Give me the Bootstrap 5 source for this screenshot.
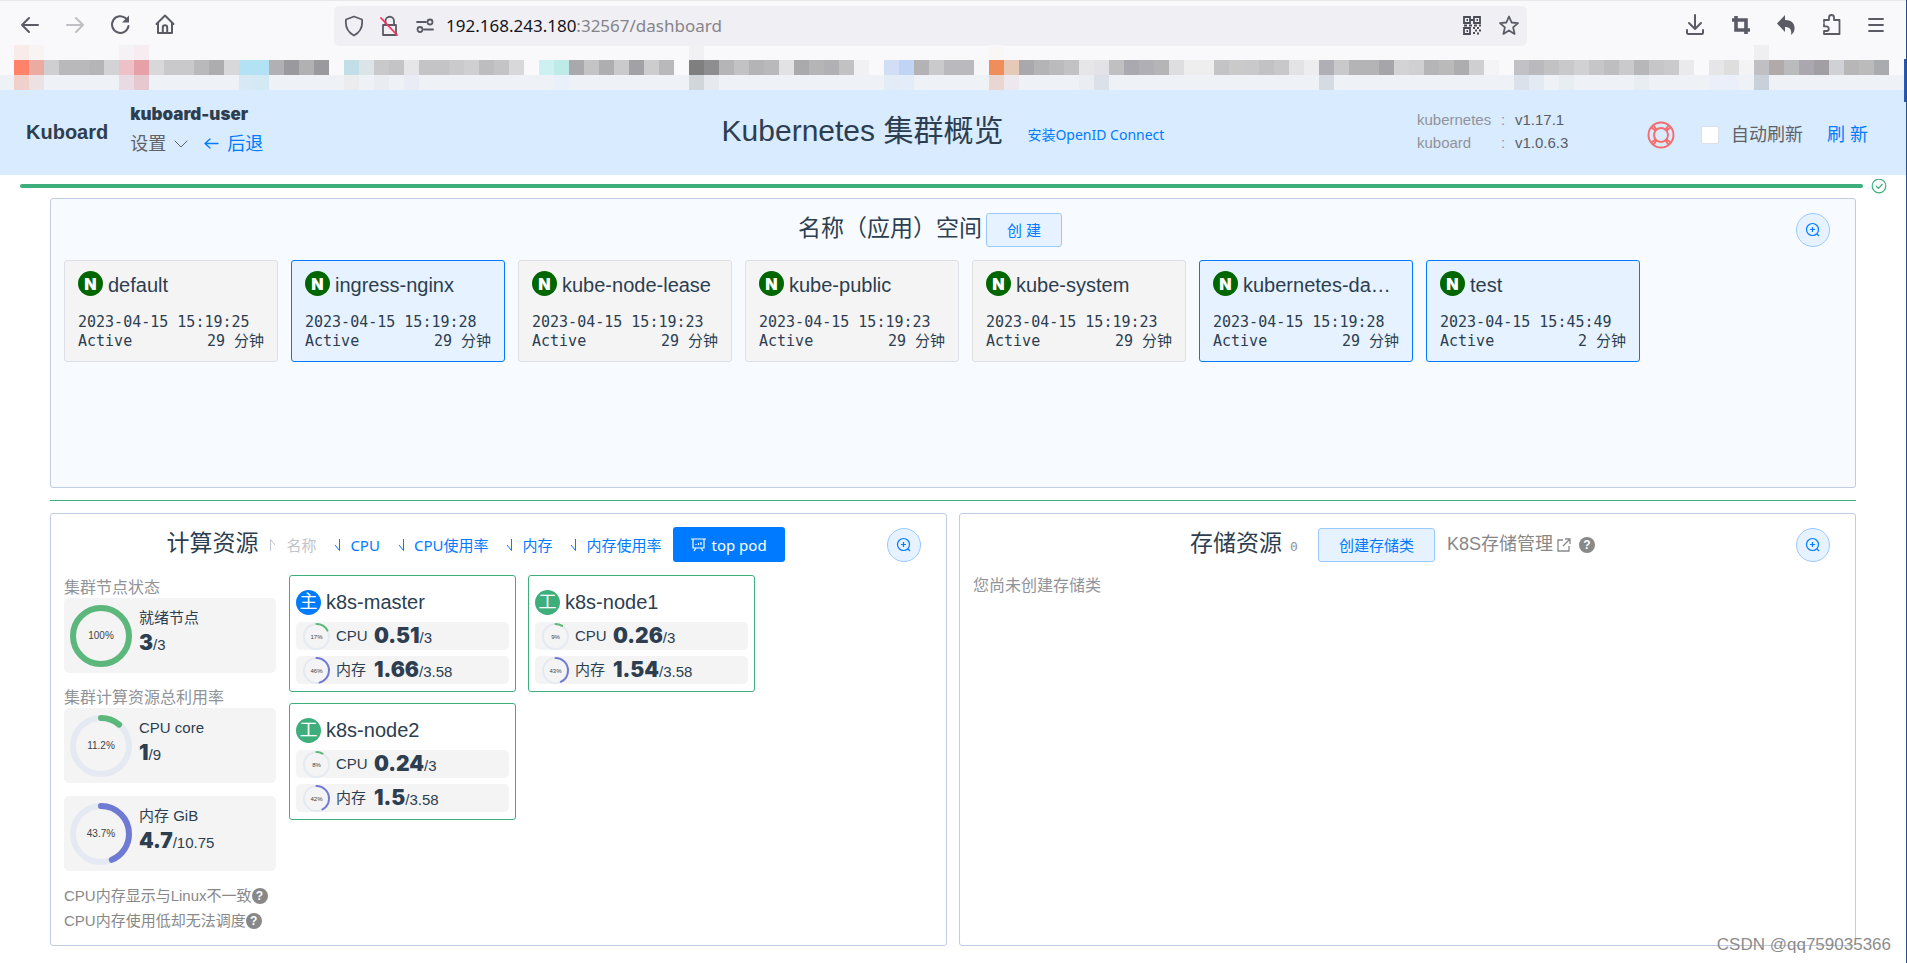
<!DOCTYPE html>
<html lang="zh-CN">
<head>
<meta charset="utf-8">
<meta name="viewport" content="width=device-width, initial-scale=1">
<title>Kuboard</title>
<link href="https://cdn.jsdelivr.net/npm/bootstrap@5.3.0/dist/css/bootstrap.min.css" rel="stylesheet">
<style>
:root{--ink:#2c3e50;--blue:#007bff;--green:#3eaf7c;--muted:#909399;--ui:"Noto Sans","Noto Sans CJK SC",sans-serif;}
body{font-family:"Liberation Sans","Noto Sans CJK SC",sans-serif;font-size:15px;line-height:20px;color:var(--ink);background:#fff;border-right:1px solid #24508f;}
svg{display:block;flex:none}
.ico{fill:none;stroke:currentColor;stroke-width:2;stroke-linecap:round;stroke-linejoin:round}
.plain{background:none;border:0;padding:0;color:inherit;line-height:inherit}
.ui-font{font-family:var(--ui);font-size:14px}
/* browser chrome */
.chrome{background:#f9f9fb;border-top:1px solid #e8e8ea;height:45px;padding:5px 19px 0 18px;color:#5b5b66}
.chrome .tools{width:316px;padding-top:6px;gap:21px}
.address{background:#f0eff4;border-radius:5px;height:40px;flex:1 1 0;padding:0 7px 0 10px}
.host{font-family:var(--ui);font-size:17px;color:#15141a}
.host span{color:#85848a}
.chrome .more{width:360px;padding:0 0 2px 156px}
.bookmarks{overflow:hidden;background:#f9f9fb}
.strip{height:15px;padding-left:14px;overflow:hidden}
.strip i{flex:0 0 15px}
.strip.low{background:#eef2f7}
.thumb{position:absolute;right:0;top:59px;width:2px;height:43px;background:#2457b8}
/* header */
.top{display:grid;grid-template-columns:1fr auto 1fr;background:#d9ebff;height:85px;padding:0 38px 0 26px;align-items:center}
.brand{font-size:20px;font-weight:700;padding-bottom:2px}
.account{margin-left:22px;padding-bottom:6px}
.user{font-family:Inter,"Liberation Sans",sans-serif;font-weight:900;font-size:17px;line-height:20px}
.nav-line{font-size:18px;line-height:24px;color:#606266}
.blue{color:var(--blue);text-decoration:none}
.page-title{font-size:30px;line-height:40px;font-weight:400}
.versions{display:grid;grid-template-columns:84px 14px 100px;line-height:23px;color:var(--muted)}
.versions dt,.versions dd{font-weight:400;margin:0}
.versions .v{color:#5a5e66}
.check{width:18px;height:18px;border:1px solid #dcdfe6;border-radius:2px;background:#fff;appearance:none;flex:none;margin-left:26px}
.big-btn{font-size:18px;line-height:24px}
/* body */
.loadbar{padding:4px 19px 1px 20px;height:23px}
.loadbar .line{height:4px;border-radius:2px;background:var(--green);flex:1;margin-top:5px}
.board{padding:0 50px 17px}
.panel{border:1px solid #bfcce2;border-radius:3px;padding:13px 13px 12px}
.panel.ns{background:#f7fbff;min-height:290px}
.head-row{height:35px;margin-bottom:13px;padding-right:12px}
.head-row h2{font-size:23px;line-height:34px;font-weight:400;margin:0}
.soft{background:#e6f2ff;border:1px solid #99caff;color:var(--blue);border-radius:3px;font-size:15px;line-height:20px;font-family:var(--ui)}
.soft:hover{background:#e6f2ff;color:var(--blue);border-color:#99caff}
.round{width:34px;height:34px;border-radius:50%;display:grid;place-items:center;padding:0}
.divider{height:1px;background:var(--green);margin:12px 0}
.ns-list{gap:13px}
.ns-item{flex:0 0 214px;min-width:0;border:1px solid #dcdfe6;background:#f4f4f5;border-radius:3px;padding:10px 13px 10px}
.ns-item.on{background:#e6f2ff;border-color:var(--blue)}
.dot{width:25px;height:25px;border-radius:50%;color:#fff;display:grid;place-items:center;flex:none;font-size:18px;line-height:24px}
.dot.n{background:#060;font-family:Inter,sans-serif;font-weight:900;font-size:16px}
.dot.m{background:var(--blue)}
.dot.w{background:var(--green)}
.name{font-size:20px;line-height:28px}
.title-line{gap:5px}
.ns-item .title-line{margin-bottom:14px}
.meta{font-family:"DejaVu Sans Mono","Noto Sans CJK SC",monospace;font-size:15px;line-height:19px}
.sort{gap:6px;font-size:15px;font-family:var(--ui)}
.primary{background:var(--blue);color:#fff;border-radius:3px;font:15px/20px var(--ui);padding:7px 18px;height:35px;border:0}
.pair{display:grid;grid-template-columns:1fr 1fr;gap:12px}
.side{width:212px;flex:none}
.label-line{font-size:16px;line-height:21px;padding-top:2px;color:var(--muted)}
.stat{background:#f4f4f5;border-radius:5px;height:75px;padding:0 6px}
.stat-text{margin-left:7px;padding-bottom:8px}
.stat-text .value{margin-top:3px}
.stack{display:grid;gap:13px}
.heavy{font-family:Inter,sans-serif;font-weight:900;font-size:21px;line-height:24px}
.help{color:#888;line-height:25px}
.q{width:16px;height:16px;border-radius:50%;background:#888;color:#fff;font-size:12px;font-weight:700;line-height:16px;text-align:center;flex:none}
.nodes{gap:11px 12px;align-content:flex-start;margin-left:13px}
.node{flex:0 0 227px;border:1px solid var(--green);border-radius:3px;padding:12px 6px 7px}
.usage{background:#f4f4f5;border-radius:5px;height:28px;padding-left:7px;margin-top:6px}
.usage .tag-name{width:38px;margin-left:6px}
.above{margin-top:12px}
.watermark{position:absolute;right:15px;bottom:6px;font-size:17px;line-height:24px;color:#8c8c8c}
.page{position:relative}
</style>
</head>
<body>
<svg width="0" height="0" class="position-absolute" aria-hidden="true">
<symbol id="zoom" viewBox="0 0 16 16"><g fill="none" stroke="currentColor" stroke-width="1.2"><circle cx="7.5" cy="7.5" r="6"/><path d="M7.5 5v5M5 7.5h5M12 12l2 2"/></g></symbol>
<symbol id="up" viewBox="0 0 16 16"><path d="M6.500 14V2.500L11 8" fill="none" stroke="currentColor" stroke-width="1"/></symbol>
<symbol id="down" viewBox="0 0 16 16"><path d="M9.500 2v11.500L5 8" fill="none" stroke="currentColor" stroke-width="1"/></symbol>
</svg>
<div class="page">
<div class="chrome d-flex">
  <div class="tools d-flex align-items-start">
    <button class="plain" aria-label="后退一页"><svg class="ico" width="24" height="24" viewBox="0 0 24 24"><path d="M4 13h16M11 6l-7 7 7 7"/></svg></button>
    <button class="plain" aria-label="前进" style="color:#bfbfc5"><svg class="ico" width="24" height="24" viewBox="0 0 24 24"><path d="M4 13h16M13 6l7 7-7 7"/></svg></button>
    <button class="plain" aria-label="重新加载"><svg class="ico" width="24" height="24" viewBox="0 0 24 24"><path d="M18 6.500A8.300 8.300 0 1 0 20.500 14"/><path d="M21 3.500v7h-7z" fill="currentColor" stroke="none"/></svg></button>
    <button class="plain" aria-label="主页"><svg class="ico" width="24" height="24" viewBox="0 0 24 24"><path d="M3.500 12l8.500-8.500 8.500 8.500M5 11v10h14V11M9.800 21v-5.500a2.200 2.200 0 0 1 4.400 0V21"/></svg></button>
  </div>
  <div class="address d-flex align-items-center">
    <svg class="ico" width="20" height="24" viewBox="0 0 20 24"><path d="M10 2.500l8 3c1 8-2.500 13-8 16-5.500-3-9-8-8-16z" stroke-width="1.800"/></svg>
    <svg class="ico ms-3" width="20" height="24" viewBox="0 0 20 24"><path d="M5.500 10V7a4 4 0 0 1 8.500 0v3M3 11h13v10H3z" stroke-width="1.800"/><path d="M1 4l16 17" stroke="#ff2d5c" stroke-width="1.800"/></svg>
    <svg class="ico ms-3" width="18" height="24" viewBox="0 0 18 24"><path d="M1 8h9M8 15.500h9" stroke-width="1.800"/><circle cx="14" cy="8" r="2.500" stroke-width="1.800"/><circle cx="4" cy="15.500" r="2.500" stroke-width="1.800"/></svg>
    <a class="host ps-2 ms-1 flex-grow-1 text-decoration-none" href="#">192.168.243.180<span>:32567/dashboard</span></a>
    <svg width="20" height="22" viewBox="0 0 20 22" fill="none" stroke="#4b4b55" stroke-width="1.800"><path d="M2 2h6v6H2zM12 2h6v6h-6zM2 13h6v6H2z"/><path d="M4.500 5h1.500M14.500 5H16M4.500 16H6M8 5h4M2 10.500h3M7 10.500h3M12 10.500h3M17 10.500h2M11 13h2M15 13h2M13 15.500h2M17 15.500h2M11 18h2M15 18.500h2" /></svg>
    <svg class="ico ms-3" width="22" height="24" viewBox="0 0 22 24"><path d="M11 2.500l2.600 6 6.400.6-4.900 4.300 1.500 6.500-5.600-3.500-5.600 3.500 1.500-6.500L2 9.100l6.400-.6z" stroke-width="1.800"/></svg>
  </div>
  <div class="more d-flex justify-content-between align-items-center">
    <button class="plain" aria-label="下载"><svg class="ico" width="24" height="24" viewBox="0 0 24 24"><path d="M12 2v13M6 10l6 6 6-6M4 17v2.500a1.500 1.500 0 0 0 1.500 1.500h13a1.500 1.500 0 0 0 1.500-1.500V17"/></svg></button>
    <button class="plain" aria-label="裁剪"><svg width="24" height="24" viewBox="0 0 24 24" fill="none" stroke="currentColor" stroke-width="3.600"><path d="M7 3v14h14M3 7h14v14"/></svg></button>
    <button class="plain" aria-label="撤销"><svg width="24" height="24" viewBox="0 0 24 24" fill="currentColor"><path d="M11 2v5c7 0 10 4 9.500 9-.2 2.500-1.500 4.500-3.500 6 1-5-1-8-6-8v5L3 10.500z"/></svg></button>
    <button class="plain" aria-label="扩展"><svg class="ico" width="24" height="24" viewBox="0 0 24 24"><path d="M4 9V7h5V4.500a2.500 2.500 0 0 1 5 0V7h5.500v14H4v-3h2.500a2.300 2.300 0 0 0 0-4.600H4V11" stroke-width="1.800"/></svg></button>
    <button class="plain" aria-label="菜单"><svg class="ico" width="22" height="24" viewBox="0 0 22 24"><path d="M4 6h14M4 12h14M4 18h14" stroke-width="1.800"/></svg></button>
  </div>
</div>
<div class="bookmarks" aria-hidden="true"><div class="strip d-flex" id="s0"></div><div class="strip d-flex" id="s1"></div><div class="strip low d-flex" id="s2"></div></div>

<header class="top">
  <div class="d-flex align-items-center">
    <div class="brand">Kuboard</div>
    <div class="account">
      <div class="user">kuboard-user</div>
      <div class="nav-line d-flex align-items-center mt-2"><button class="plain d-flex align-items-center gap-2">设置 <svg class="ico" width="14" height="14" viewBox="0 0 14 14"><path d="M1 4l6 6 6-6" stroke-width="1"/></svg></button><a class="blue d-flex align-items-center ms-3 gap-2" href="#"><svg class="ico" width="15" height="15" viewBox="0 0 15 15"><path d="M1 7.500h13M6 3L1 7.500 6 12" stroke-width="1.300"/></svg>后退</a></div>
    </div>
  </div>
  <div class="d-flex align-items-center pe-2 pb-1">
    <h1 class="page-title m-0">Kubernetes 集群概览</h1>
    <a class="blue ui-font ms-4 pt-2" href="#">安装OpenID Connect</a>
  </div>
  <div class="d-flex align-items-center justify-content-end pt-1">
    <dl class="versions m-0 me-4 pe-2 pb-2"><dt>kubernetes</dt><dd>:</dd><dd class="v">v1.17.1</dd><dt>kuboard</dt><dd>:</dd><dd class="v">v1.0.6.3</dd></dl>
    <svg width="28" height="28" viewBox="0 0 28 28" fill="none" stroke="#f56c6c" stroke-width="1.900"><circle cx="14" cy="14" r="12.500"/><circle cx="14" cy="14" r="7"/><path d="M4.500 6.500L9 10M6.500 4.500L10 9M23.500 6.500L19 10M21.500 4.500L18 9M4.500 21.500L9 18M6.500 23.500L10 19M23.500 21.500L19 18M21.500 23.500L18 19"/></svg>
    <input class="check" type="checkbox" id="auto"><label class="big-btn ms-2 ps-1 me-4" for="auto" style="color:#606266">自动刷新</label>
    <button class="plain blue big-btn">刷 新</button>
  </div>
</header>

<div class="loadbar d-flex align-items-start gap-2"><div class="line"></div><svg width="16" height="16" viewBox="0 0 16 16" fill="none" stroke="#3eaf7c" stroke-width="1.200"><circle cx="8" cy="7" r="6.800"/><path d="M5 7l2.500 2.500L11.500 5"/></svg></div>

<main class="board">
  <section class="panel ns">
    <div class="head-row d-flex align-items-center"><div class="d-flex align-items-center justify-content-center flex-grow-1 gap-1"><h2 class="pb-1">名称（应用）空间</h2><button class="btn soft px-3"><span class="px-1">创 建</span></button></div><button class="btn soft round" aria-label="放大"><svg width="16" height="16"><use href="#zoom"/></svg></button></div>
    <div class="ns-list d-flex flex-wrap" id="ns"></div>
  </section>
  <div class="divider"></div>
  <div class="pair">
    <section class="panel">
      <div class="head-row d-flex align-items-center"><div class="d-flex align-items-center justify-content-center flex-grow-1"><h2 class="me-2 pb-1">计算资源</h2>
        <button class="plain sort d-flex align-items-center me-3" style="color:#c0c4cc" disabled><svg width="14" height="16" viewBox="2 0 14 16"><use href="#up" width="16" height="16"/></svg>名称</button>
        <button class="plain sort blue d-flex align-items-center me-3"><svg width="12" height="16" viewBox="2 0 12 16"><use href="#down" width="16" height="16"/></svg>CPU</button>
        <button class="plain sort blue d-flex align-items-center me-3"><svg width="12" height="16" viewBox="2 0 12 16"><use href="#down" width="16" height="16"/></svg>CPU使用率</button>
        <button class="plain sort blue d-flex align-items-center me-3"><svg width="12" height="16" viewBox="2 0 12 16"><use href="#down" width="16" height="16"/></svg>内存</button>
        <button class="plain sort blue d-flex align-items-center me-2"><svg width="12" height="16" viewBox="2 0 12 16"><use href="#down" width="16" height="16"/></svg>内存使用率</button>
        <button class="btn primary d-flex align-items-center ms-1"><svg class="me-1" width="16" height="16" viewBox="0 0 16 16" fill="none" stroke="#fff" stroke-width="1.200"><path d="M0 2h15M2 2v9h11V2M5 11l-2 3M10 11l2 3M5 8V7M7.500 8V6M10 8V5"/></svg>top pod</button></div>
        <button class="btn soft round" aria-label="放大"><svg width="16" height="16"><use href="#zoom"/></svg></button></div>
      <div class="d-flex">
        <div class="side">
          <div class="label-line">集群节点状态</div><div id="st1"></div>
          <div class="label-line above">集群计算资源总利用率</div><div class="stack" id="st2"></div>
          <div class="help above"><div class="d-flex align-items-center">CPU内存显示与Linux不一致<span class="q">?</span></div><div class="d-flex align-items-center">CPU内存使用低却无法调度<span class="q">?</span></div></div>
        </div>
        <div class="nodes d-flex flex-wrap flex-grow-1" id="nodes"></div>
      </div>
    </section>
    <section class="panel">
      <div class="head-row d-flex align-items-center"><div class="d-flex align-items-center justify-content-center flex-grow-1 ps-3"><h2 class="pb-1">存储资源</h2><span class="ms-2 pt-1 me-3" style="font:13px/20px 'DejaVu Sans Mono',monospace;color:#909399">0</span><button class="btn soft ms-1 px-3"><span class="px-1">创建存储类</span></button>
        <a href="#" class="help big-btn text-decoration-none d-flex align-items-center ms-2 ps-1">K8S存储管理<svg class="ms-1 me-2" width="14" height="14" viewBox="0 0 14 14" fill="none" stroke="#888" stroke-width="1.300"><path d="M6 2H1v11h11V8M8 1h5v5M13 1L6 8"/></svg></a><span class="q">?</span></div>
        <button class="btn soft round" aria-label="放大"><svg width="16" height="16"><use href="#zoom"/></svg></button></div>
      <div class="label-line pt-0">您尚未创建存储类</div>
    </section>
  </div>
</main>
<div class="thumb"></div>
<div class="watermark">CSDN @qq759035366</div>
</div>
<script src="https://cdn.jsdelivr.net/npm/bootstrap@5.3.0/dist/js/bootstrap.bundle.min.js"></script>
<script>
const put = (id, html) => document.getElementById(id).innerHTML = html;
const strip = cells => cells.map(c => `<i style="background:${c ? '#' + c : 'transparent'}"></i>`).join('');
const sparse = o => strip(Array.from({length: 125}, (_, i) => o[i]));
put('s1', strip(('ff826b ecaba1 cfcfd1 b9b9bb b9b9bb b5b5b7 d3d3d5 eec0c8 e79fa8 d8d8da c9c9cb c9c9cb b9b9bb adadaf d8d8da b2e2f4 b2e2f4 b1b1b3 9a999e b1b1b3 9a999e f9f9fb c2dfe7 dbe4e7 c9c9cc c4c4c7 e6e6e8 c4c4c6 c4c4c6 cacacc cfcfd1 bdbdbf c4c4c6 d8d8da f9f9fb cdf0f0 beebe8 a9a8ad c4c4c7 aeaeb1 cacacc a2a2a6 cdcdcf b9b9bb f9f9fb 7f7f7f 8e8e91 b5b5b7 c2c2c4 b4b4b7 b9b9bb e2e2e4 aaaaac b5b5b7 b1b0b5 c2c2c4 f1f1f3 f9f9fb d1def6 c0d5f5 b3b3b5 cacacc bab9be bab9be f6f6f8 f08e5b e6cab7 a9a8ad b4b4b6 bbbbbd c2c2c4 e6e6e8 e2e2e7 c0c0c2 aaa9af b0afb5 b5b5b7 dedee0 eeeeee eeeeee c4c4c6 cacaca c9c9cc c2c2c4 c8c8ca e3e3e5 ededef b0afb6 c9c9cc b4b4b6 b4b4b6 a6a5aa d3d3d5 d0d0d2 b5b5b8 bababb adadaf cfcfd1 f4f4f6 f9f9fb c2c1c6 bab9be c2c2c5 c9c9cc d1d1d3 c6c6c9 bebec0 cacacc b7b7b9 c6c6c8 cacacc eaeaec f9f9fb e6e6e8 dededf f3f3f5 c0bfc3 b0abaa b9bbbc aaa8ae a19fa4 d0d1d4 b7b7b7 bbbbbb aaabae').split(' ')));
put('s0', sparse({0:'f9ebea',1:'f9f4f4',7:'f5f2f5',8:'f7ecef',45:'f1f1f3',65:'f9f7f5',116:'efeff1'}));
put('s2', sparse({0:'f0d0cb',1:'ede2e3',7:'e8dbe4',8:'e6c8d1',15:'d6e9f5',16:'d3e9f3',22:'ebeced',24:'e9ecf1',26:'e9ecf5',36:'eaf0f9',45:'d1d6da',46:'e6eaee',58:'e3ebf7',59:'e3ecf9',65:'ead6d0',66:'ede7ee',71:'eaeef2',72:'dce0e8',87:'d6dbe3',100:'dbe1ea',101:'e3eaf4',103:'e8edf2',108:'e8edf2',113:'eaeffa',114:'eaeffa',116:'c8d0d9'}));

put('ns', [['default','15:19:25',29],['ingress-nginx','15:19:28',29,1],['kube-node-lease','15:19:23',29],['kube-public','15:19:23',29],['kube-system','15:19:23',29],['kubernetes-da…','15:19:28',29,1],['test','15:45:49',2,1]]
 .map(([n, t, m, on]) => `<div class="ns-item ${on ? 'on' : ''}"><div class="title-line d-flex"><span class="dot n">N</span><span class="name text-nowrap">${n}</span></div><div class="meta">2023-04-15 ${t}</div><div class="meta d-flex justify-content-between"><span>Active</span><span>${m} 分钟</span></div></div>`).join(''));

function gauge(size, width, pct, color, label, font) {
  const c = size / 2, r = c - width / 2;
  return `<svg width="${size}" height="${size}" viewBox="0 0 ${size} ${size}"><g fill="none" stroke-width="${width}" transform="rotate(-90 ${c} ${c})"><circle cx="${c}" cy="${c}" r="${r}" stroke="#e5e9f2"/><circle cx="${c}" cy="${c}" r="${r}" stroke="${color}" stroke-linecap="round" pathLength="100" stroke-dasharray="${pct} 200"/></g><text x="${c}" y="${c + font / 3}" text-anchor="middle" font-size="${font}" fill="#404246">${label}</text></svg>`;
}
const G = '#5cb87a', P = '#6f7ad3';
const stat = (pct, color, name, used, total) => `<div class="stat d-flex align-items-center">${gauge(62, 6, pct, color, pct + '%', 10)}<div class="stat-text"><div>${name}</div><div class="value"><span class="heavy">${used}</span>/${total}</div></div></div>`;
put('st1', stat(100, G, '就绪节点', 3, 3));
put('st2', stat(11.2, G, 'CPU core', 1, 9) + stat(43.7, P, '内存 GiB', '4.7', '10.75'));
const usage = (pct, color, name, used, total) => `<div class="usage d-flex align-items-center">${gauge(27, 2, pct, color, pct + '%', 6)}<span class="tag-name">${name}</span><span><span class="heavy">${used}</span>/${total}</span></div>`;
put('nodes', [['m','主','k8s-master',17,'0.51',46,'1.66'],['w','工','k8s-node1',9,'0.26',43,'1.54'],['w','工','k8s-node2',8,'0.24',42,'1.5']]
 .map(([k, g, n, cp, c, mp, m]) => `<div class="node"><div class="title-line d-flex align-items-center"><span class="dot ${k}">${g}</span><span class="name">${n}</span></div>${usage(cp, G, 'CPU', c, 3)}${usage(mp, P, '内存', m, '3.58')}</div>`).join(''));
</script>
</body>
</html>
